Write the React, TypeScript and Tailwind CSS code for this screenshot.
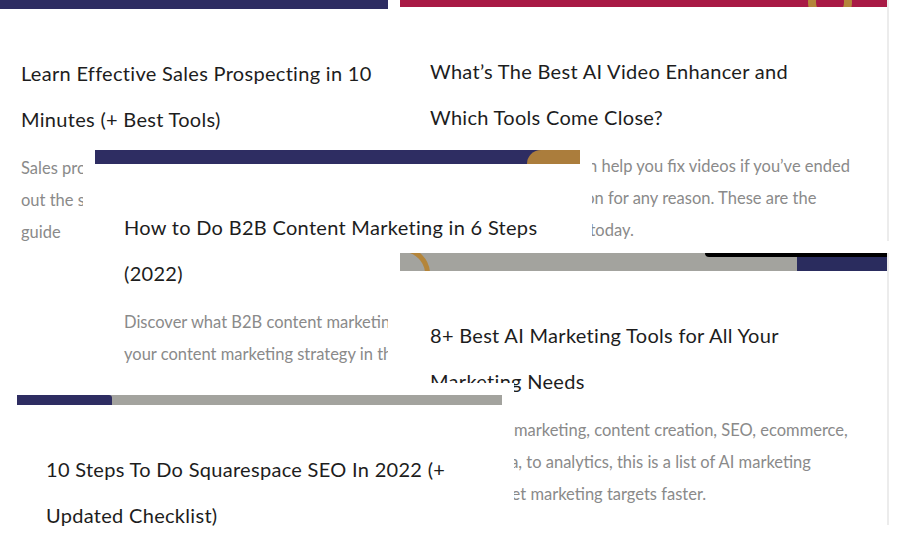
import React from "react";

type C = {
  x: number; y: number; w: number; h: number; bar: number; cy: number; pl: number; tw: number;
  barEl: React.ReactNode; title: string; desc: string[]; shadow?: boolean;
};

const cards: C[] = [
  {
    x: 0, y: 0, w: 391, h: 270, bar: 9, cy: 73, pl: 21, tw: 368,
    barEl: <div className="h-full bg-[#2e2d62]" />,
    title: "Learn Effective Sales Prospecting in 10 Minutes (+ Best Tools)",
    desc: ["Sales prospecting is the process of finding leads. Check", "out the sales prospecting techniques in this", "guide"],
  },
  {
    x: 400, y: 0, w: 487, h: 253, bar: 7, cy: 71, pl: 30, tw: 375, shadow: true,
    barEl: (
      <div className="relative h-full bg-[#a81a45] overflow-hidden">
        <div className="absolute left-[408px] top-[-20px] w-[44px] h-[44px] rounded-full border-[8px] border-[#b4853a]" />
      </div>
    ),
    title: "What’s The Best AI Video Enhancer and Which Tools Come Close?",
    desc: ["AI video enhancers can help you fix videos if you’ve ended", "up with a low resolution for any reason. These are the", "best tools you can try today."],
  },
  {
    x: 95, y: 150, w: 485, h: 243, bar: 14, cy: 77, pl: 29, tw: 440,
    barEl: (
      <div className="relative h-full bg-[#2e2d62] overflow-hidden">
        <div className="absolute left-[432px] top-0 w-[60px] h-full bg-[#ab7d3c] rounded-tl-[14px]" />
      </div>
    ),
    title: "How to Do B2B Content Marketing in 6 Steps (2022)",
    desc: ["Discover what B2B content marketing is and how to improve", "your content marketing strategy in this guide."],
  },
  {
    x: 400, y: 253, w: 487, h: 272, bar: 18, cy: 82, pl: 30, tw: 365, shadow: true,
    barEl: (
      <div className="relative h-full bg-[#a3a39e] overflow-hidden">
        <div className="absolute left-[-24px] top-[-6px] w-[54px] h-[54px] rounded-full border-[5px] border-[#b4853a]" />
        <div className="absolute left-[305px] top-0 w-[190px] h-[4px] bg-black rounded-bl-[6px]" />
        <div className="absolute left-[397px] top-[4px] w-[90px] h-[14px] bg-[#2a2c5e]" />
      </div>
    ),
    title: "8+ Best AI Marketing Tools for All Your Marketing Needs",
    desc: ["From email marketing, content creation, SEO, ecommerce,", "social media, to analytics, this is a list of AI marketing", "tools to meet marketing targets faster."],
  },
  {
    x: 17, y: 395, w: 485, h: 200, bar: 10, cy: 74, pl: 29, tw: 415,
    barEl: (
      <div className="flex h-full bg-[#a3a39e]">
        <div className="w-[95px] h-full bg-[#2e2d62] rounded-tr-[3px]" />
      </div>
    ),
    title: "10 Steps To Do Squarespace SEO In 2022 (+ Updated Checklist)",
    desc: [],
  },
];

export default function App() {
  return (
    <div className="relative w-[899px] h-[550px] overflow-hidden bg-white" style={{ fontFamily: "Lato, 'Open Sans', sans-serif" }}>
      {cards.map((c, i) => (
        <div
          key={i}
          className="absolute flex flex-col bg-white shadow-[0_0_0_12px_white]"
          style={{ left: c.x, top: c.y, width: c.w, height: c.h }}
        >
          {c.shadow && <div className="absolute right-[-2px] top-0 w-[2px] h-full bg-[#ececec]" />}
          <div style={{ height: c.bar }}>{c.barEl}</div>
          <div className="overflow-hidden" style={{ paddingTop: c.cy - c.bar - 23, paddingLeft: c.pl }}>
            <h2 className="text-[20px] leading-[46px] text-[#1d1d1d] tracking-[0.3px]" style={{ width: c.tw }}>{c.title}</h2>
            <div className="mt-[10px] text-[16.5px] leading-[32px] text-[#8a8a8a] whitespace-nowrap">
              {c.desc.map((d, j) => <div key={j}>{d}</div>)}
            </div>
          </div>
        </div>
      ))}
    </div>
  );
}
